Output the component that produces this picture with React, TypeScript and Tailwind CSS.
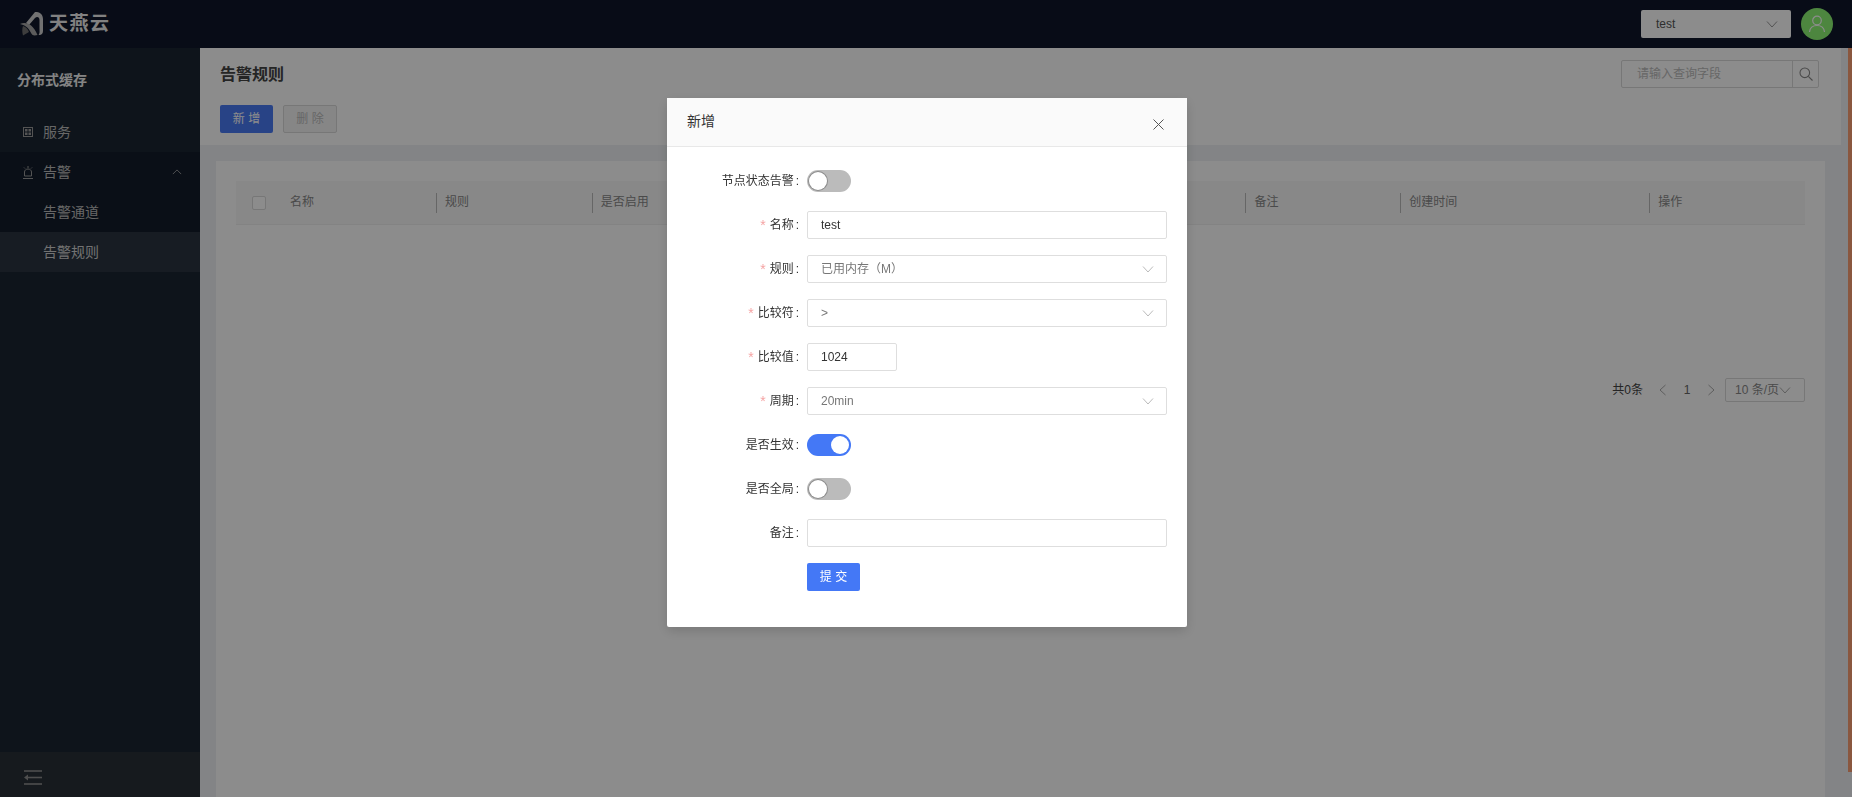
import React from "react";

function Chevron({ className = "", up = false }: { className?: string; up?: boolean }) {
  return (
    <svg className={className} width="12" height="12" viewBox="0 0 12 12" fill="none" stroke="currentColor" strokeWidth="1">
      <path d={up ? "M1 8.5 L6 3.5 L11 8.5" : "M1 3.5 L6 9 L11 3.5"} />
    </svg>
  );
}

function Logo() {
  return (
    <div className="flex items-center">
      <svg width="24" height="24" viewBox="0 0 24 24" className="mr-[5px]">
        <path d="M15 0 C20 -0.5 23 3 23 7 V19 C23 22 21 23.500 18.500 23 C20 21 19.500 19 19.500 17 V8 C19.500 5 17 4 15 6 L9 13 L6 11 Z" fill="#d0d0d0" />
        <path d="M0 12 C6 9.500 13 12 17.500 23 C14 24 12 23.500 10.500 20 C8.500 15.500 4.500 13 0 12 Z" fill="#a8a8a8" />
        <path d="M3 14 C6 15 8 17 9 20 C7 21 5 22.500 3 23.500 C2 20 2 17 3 14 Z" fill="#707070" />
      </svg>
      <span className="text-[19px] leading-6 font-bold tracking-[1.5px] text-[#ececec]">天燕云</span>
    </div>
  );
}

function TopBar() {
  return (
    <header className="h-12 bg-[#0f172a] flex items-center pl-5 pr-[19px] shrink-0">
      <Logo />
      <div className="ml-auto w-[150px] h-7 bg-white rounded-[2px] flex items-center pl-[15px] pr-[13px] text-[12px] text-[#555]">
        <span>test</span>
        <Chevron className="ml-auto text-[#999]" />
      </div>
      <div className="ml-[10px] w-8 h-8 rounded-full bg-[#8cf573] flex items-center justify-center">
        <svg width="20" height="20" viewBox="0 0 20 20" fill="none" stroke="#fff" strokeWidth="1.200">
          <circle cx="10" cy="6.500" r="4.300" />
          <path d="M2.500 18 C3 13.500 6 11.500 10 11.500 C14 11.500 17 13.500 17.500 18" />
        </svg>
      </div>
    </header>
  );
}

function Sidebar() {
  return (
    <aside className="w-[200px] shrink-0 bg-[#1a2632] flex flex-col">
      <div className="h-[64px] pl-[17px] flex items-center text-[14px] font-bold text-[#f0f0f0]">分布式缓存</div>
      <div className="h-10 flex items-center pl-[23px] text-[14px] text-[#bcbcbc]">
        <svg width="10" height="10" viewBox="0 0 10 10" fill="none" stroke="#999" strokeWidth="1" className="mr-[10px]">
          <rect x="0.500" y="0.500" width="9" height="9" />
          <rect x="2" y="2" width="2.500" height="2.500" fill="#999" stroke="none" />
          <rect x="5.500" y="2" width="2.500" height="2.500" fill="#999" stroke="none" />
          <rect x="2" y="5.500" width="2.500" height="2.500" fill="#999" stroke="none" />
          <rect x="5.500" y="5.500" width="2.500" height="2.500" fill="#999" stroke="none" />
        </svg>
        服务
      </div>
      <div className="bg-[#131c2a]">
        <div className="h-10 flex items-center pl-[23px] pr-[18px] text-[14px] text-[#bcbcbc]">
          <svg width="10" height="13" viewBox="0 0 10 13" fill="none" stroke="#999" strokeWidth="1" className="mr-[10px]">
            <path d="M5 0 V2 M1 1.500 L2 2.500 M9 1.500 L8 2.500" />
            <path d="M1.500 10 V6 C1.500 4.300 3 3 5 3 C7 3 8.500 4.300 8.500 6 V10 Z" />
            <path d="M0 12.500 H10" />
          </svg>
          告警
          <Chevron up className="ml-auto text-[#aaa] w-[10px] h-[10px]" />
        </div>
        <div className="h-10 flex items-center pl-[43px] text-[14px] text-[#bcbcbc]">告警通道</div>
      </div>
      <div className="h-10 flex items-center pl-[43px] text-[14px] text-[#d0d0d0] bg-[#2a3441]">告警规则</div>
      <div className="mt-auto h-[45px] bg-[#283038] flex items-center pl-6">
        <svg width="18" height="15" viewBox="0 0 18 15" fill="none" stroke="#8e8e8e" strokeWidth="1.600" className="mt-[5px]">
          <path d="M0 1 H18" />
          <path d="M3 7.500 H18" />
          <path d="M0 14 H18" />
          <path d="M0 7.500 L4 4.500 V10.500 Z" fill="#8e8e8e" stroke="none" />
        </svg>
      </div>
    </aside>
  );
}

function Th({ w, text, divider = true }: { w: string; text: string; divider?: boolean }) {
  return (
    <div className={`${w} h-full flex items-center`}>
      <div className={`h-5 pl-2 pb-[2px] flex items-center ${divider ? "border-l border-[#bbb]" : "ml-px"}`}>{text}</div>
    </div>
  );
}

function Main() {
  return (
    <main className="flex-1 flex min-w-0 bg-[#eef1f4]">
      <div className="w-[1641px] shrink-0 flex flex-col">
        <div className="h-[97px] bg-white pl-5 pr-[22px] pt-3 shrink-0">
          <div className="h-7 flex items-center">
            <h1 className="text-[16px] font-bold text-[#444] mt-[2px]">告警规则</h1>
            <div className="ml-auto w-[198px] h-7 flex border border-[#d9d9d9] rounded-[2px]">
              <div className="flex-1 pl-[15px] flex items-center text-[12px] text-[#bbb]">请输入查询字段</div>
              <div className="w-[26px] border-l border-[#d9d9d9] flex items-center justify-center">
                <svg width="14" height="14" viewBox="0 0 14 14" fill="none" stroke="#888" strokeWidth="1.100">
                  <circle cx="5.800" cy="5.800" r="4.800" />
                  <path d="M9.300 9.300 L13.500 13.500" />
                </svg>
              </div>
            </div>
          </div>
          <div className="mt-[17px] flex gap-[10px]">
            <button className="w-[53px] h-7 rounded-[2px] bg-[#4a7bf5] text-white text-[12px]">新 增</button>
            <button className="w-[54px] h-7 rounded-[2px] bg-[#f5f5f5] border border-[#d9d9d9] text-[#bbb] text-[12px]">删 除</button>
          </div>
        </div>
        <div className="flex-1 ml-4 mr-4 mt-4 bg-white px-5 pt-5">
          <div className="h-11 bg-[#f7f7f7] border-b border-[#eee] flex items-center text-[12px] text-[#888]">
            <div className="w-[45px] h-full flex items-center pl-4">
              <div className="w-[14px] h-[14px] bg-white border border-[#d9d9d9] rounded-[2px]" />
            </div>
            <Th w="w-[155px]" text="名称" divider={false} />
            <Th w="w-[156px]" text="规则" />
            <Th w="w-[654px]" text="是否启用" />
            <Th w="w-[155px]" text="备注" />
            <Th w="w-[249px]" text="创建时间" />
            <Th w="w-[156px]" text="操作" />
          </div>
          <div className="mt-[153px] flex items-center justify-end h-6 text-[12px] text-[#666]">
            <span className="text-[#444]">共0条</span>
            <Chevron className="ml-[14px] rotate-90 text-[#aaa]" />
            <span className="ml-[14px] w-2 text-center">1</span>
            <Chevron className="ml-[14px] -rotate-90 text-[#aaa]" />
            <div className="ml-[8px] w-[80px] h-6 border border-[#d9d9d9] rounded-[2px] flex items-center pl-[9px] pr-[13px] text-[#888] whitespace-nowrap">
              10 条/页
              <Chevron className="ml-auto text-[#aaa]" />
            </div>
          </div>
        </div>
      </div>
      <div className="flex-1 flex justify-end">
        <div className="w-1 h-[724px] bg-[#fb9e73]" />
      </div>
    </main>
  );
}

function Label({ text, req = false }: { text: string; req?: boolean }) {
  return (
    <label className="w-[140px] pr-2 shrink-0 flex items-center justify-end text-[12px] text-[#333]">
      {req && <span className="text-[#f5a3a3] mr-1 text-[14px] leading-none">*</span>}
      {text}
      <span className="ml-[2px]">:</span>
    </label>
  );
}

function Toggle({ on = false }: { on?: boolean }) {
  return (
    <div className={`w-11 h-[22px] rounded-full flex items-center p-[2px] ${on ? "bg-[#4478f6] justify-end" : "bg-[#bbbbbb] justify-start"}`}>
      <div className={`w-[18px] h-[18px] rounded-full bg-white ${on ? "" : "shadow-[0_0_0_1px_rgba(0,0,0,0.25)]"}`} />
    </div>
  );
}

function Field({ value, select = false, short = false }: { value: string; select?: boolean; short?: boolean }) {
  return (
    <div className={`${short ? "w-[90px]" : "w-[360px]"} h-7 bg-white border border-[#dedede] rounded-[2px] flex items-center pl-[13px] pr-[12px] text-[12px] ${select ? "text-[#777]" : "text-[#333]"}`}>
      {value}
      {select && <Chevron className="ml-auto text-[#bbb]" />}
    </div>
  );
}

function Row({ label, req, children }: { label: string; req?: boolean; children: React.ReactNode }) {
  return (
    <div className="flex items-center h-7 mb-4">
      <Label text={label} req={req} />
      {children}
    </div>
  );
}

function Modal() {
  return (
    <div className="fixed inset-0 bg-black/45 pt-[98px] pl-[667px]">
      <div className="w-[520px] bg-white rounded-[2px] shadow-[0_4px_12px_rgba(0,0,0,0.15)]">
        <div className="h-[49px] bg-[#fafafa] border-b border-[#e8e8e8] flex items-center pl-5 pr-[23px]">
          <span className="text-[14px] text-[#333] -mt-[1px]">新增</span>
          <svg width="11" height="11" viewBox="0 0 11 11" fill="none" stroke="#555" strokeWidth="1" className="ml-auto mt-1">
            <path d="M0.500 0.500 L10.500 10.500 M10.500 0.500 L0.500 10.500" />
          </svg>
        </div>
        <div className="pt-5 pb-5 pr-5">
          <Row label="节点状态告警"><Toggle /></Row>
          <Row label="名称" req><Field value="test" /></Row>
          <Row label="规则" req><Field value="已用内存（M）" select /></Row>
          <Row label="比较符" req><Field value=">" select /></Row>
          <Row label="比较值" req><Field value="1024" short /></Row>
          <Row label="周期" req><Field value="20min" select /></Row>
          <Row label="是否生效"><Toggle on /></Row>
          <Row label="是否全局"><Toggle /></Row>
          <Row label="备注"><Field value="" /></Row>
          <div className="flex h-7 mb-4 pl-[140px]">
            <button className="w-[53px] h-7 rounded-[2px] bg-[#4478f6] text-white text-[12px]">提 交</button>
          </div>
        </div>
      </div>
    </div>
  );
}

export default function App() {
  return (
    <div className="h-[797px] w-full overflow-hidden flex flex-col [font-family:'Liberation_Sans','Noto_Sans_CJK_SC',sans-serif]">
      <TopBar />
      <div className="flex-1 flex min-h-0">
        <Sidebar />
        <Main />
      </div>
      <Modal />
    </div>
  );
}
